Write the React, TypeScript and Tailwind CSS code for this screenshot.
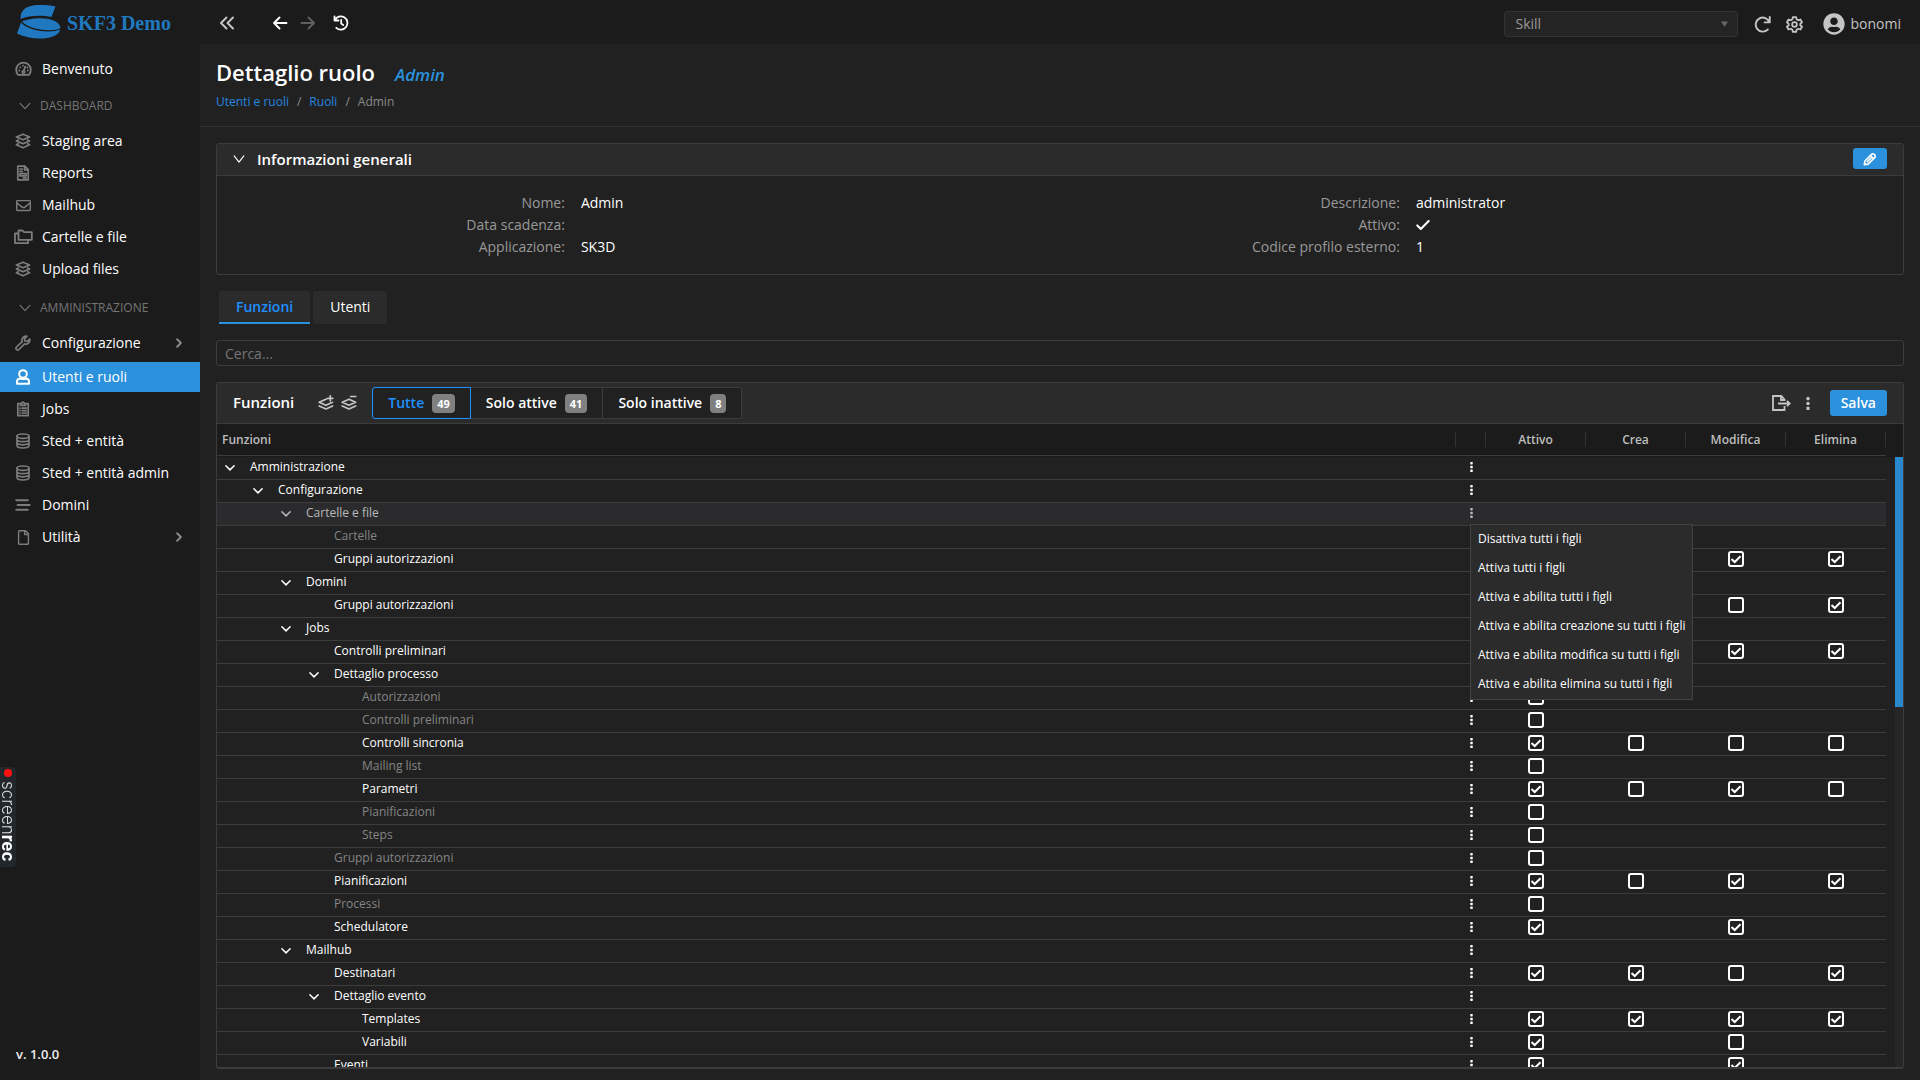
import type { ReactNode } from 'react';
import { FaRegEnvelope, FaRegFile, FaUserCircle } from 'react-icons/fa';

type IconProps = { children: ReactNode; className?: string; sw?: number };

function Icon({ children, className = 'size-4', sw = 1.5 }: IconProps) {
  return (
    <svg viewBox="0 0 16 16" fill="none" stroke="currentColor" strokeWidth={sw} strokeLinecap="round" strokeLinejoin="round" className={className} aria-hidden="true">
      {children}
    </svg>
  );
}

const icons = {
  gauge: (
    <Icon className="h-4 w-[17px]" sw={1.8}>
      <path d="M2.600 13.800A7.300 7.300 0 1 1 13.400 13.800Z" />
      <path d="M8.200 10 9.800 5.500" />
      <circle cx="8" cy="11" r="1.200" />
      <path d="M3.700 9.500h.1M4.800 6.300h.1M7.500 4.600h.1M12.200 9.500h.1M11.800 6.500h.1" />
    </Icon>
  ),
  layers: (
    <Icon sw={1.7}>
      <path d="M8 1.200 14.600 4 8 6.800 1.400 4Z" />
      <path d="M3.300 6.900 1.400 7.900 8 10.800l6.600-2.900-1.900-1" />
      <path d="M3.300 10.800 1.400 11.800 8 14.800l6.600-3-1.900-1" />
    </Icon>
  ),
  report: (
    <Icon sw={1.7}>
      <path d="M2.800 1.200h7l3.400 3.400v10.200H2.800Z" />
      <path d="M9.600 1.200v3.600h3.600M5 4h2.300M5 6.300h2.300M5 8.600h6v2.300H5ZM8.500 12.900H11" />
    </Icon>
  ),
  mail: <FaRegEnvelope className="size-[15px]" />,
  folders: (
    <svg viewBox="0 0 19 16" fill="none" stroke="currentColor" strokeWidth="1.8" strokeLinejoin="round" className="h-4 w-[19px] shrink-0" aria-hidden="true">
      <path d="M4.500 1.500h4l1.600 1.700h7.700v7.600H4.500ZM4.500 4.500H1v9.700h13v-3.400" />
    </svg>
  ),
  wrench: (
    <Icon sw={1.7}>
      <path d="M14.700 4.200 12.200 6.500 9.900 6 9.500 3.700 11.900 1.300A4 4 0 0 0 7.200 6.600L1.500 12a1.700 1.700 0 0 0 2.500 2.500L9.600 8.900a4 4 0 0 0 5.100-4.700Z" />
    </Icon>
  ),
  user: (
    <Icon sw={2}>
      <circle cx="8" cy="5" r="3.800" />
      <path d="M5 9.500C3 9.800 2 11 2 12.600v2.200h12v-2.200C14 11 13 9.800 11 9.500 9 10.300 7 10.300 5 9.500Z" />
    </Icon>
  ),
  clipboard: (
    <Icon sw={1.7}>
      <path d="M5.500 2.700H2.800v12h10.400v-12h-2.700M5.500 4.300h5V2.500H9.300a1.300 1.300 0 0 0-2.600 0H5.500Z" />
      <path d="M5 7.200h.1M7.200 7.200h4M5 9.600h.1M7.200 9.600h4M5 12h.1M7.200 12h4" />
    </Icon>
  ),
  database: (
    <Icon sw={1.7}>
      <ellipse cx="8" cy="3.200" rx="6" ry="2.200" />
      <path d="M2 3.200v9.600C2 14 4.700 15 8 15s6-1 6-2.200V3.200M2 6.400c0 1.200 2.700 2.200 6 2.200s6-1 6-2.200M2 9.600c0 1.200 2.700 2.200 6 2.200s6-1 6-2.200" />
    </Icon>
  ),
  lines: (
    <Icon sw={1.9}>
      <path d="M1.200 3.300h11.600M2.600 8h12.200M1.200 12.700h11.600" />
    </Icon>
  ),
  file: <FaRegFile className="size-[15px]" />,
};

type MenuItem = { label: string; icon: keyof typeof icons; active?: boolean; sub?: boolean };

const dashboard: MenuItem[] = [
  { label: 'Staging area', icon: 'layers' },
  { label: 'Reports', icon: 'report' },
  { label: 'Mailhub', icon: 'mail' },
  { label: 'Cartelle e file', icon: 'folders' },
  { label: 'Upload files', icon: 'layers' },
];

const admin: MenuItem[] = [
  { label: 'Configurazione', icon: 'wrench', sub: true },
  { label: 'Utenti e ruoli', icon: 'user', active: true },
  { label: 'Jobs', icon: 'clipboard' },
  { label: 'Sted + entità', icon: 'database' },
  { label: 'Sted + entità admin', icon: 'database' },
  { label: 'Domini', icon: 'lines' },
  { label: 'Utilità', icon: 'file', sub: true },
];

function NavItem({ item }: { item: MenuItem }) {
  return (
    <li className={item.sub ? 'mb-1' : 'mb-0.5'}>
      <a
        href="#"
        className={
          item.active
            ? 'flex h-[30px] items-center bg-[#2b91dc] pl-[13px] pr-[15px] text-white'
            : 'flex h-[30px] items-center pl-[13px] pr-[15px] text-white'
        }
      >
        <span className={item.active ? 'flex w-5 justify-center' : 'flex w-5 justify-center text-[#7d7d7d]'}>{icons[item.icon]}</span>
        <span className="ml-[9px] flex-1 whitespace-nowrap">{item.label}</span>
        {item.sub && (
          <Icon className="size-3 text-[#8a8a8a]" sw={2.6}>
            <path d="M5.500 3 10.500 8l-5 5" />
          </Icon>
        )}
      </a>
    </li>
  );
}

function NavSection({ label }: { label: string }) {
  return (
    <button className="flex h-10 w-full items-center pl-[19px] text-xs font-medium text-[#757575]">
      <Icon className="size-3" sw={1.6}>
        <path d="M1.500 4.500l6.500 7 6.500-7" />
      </Icon>
      <span className="ml-[9px]">{label}</span>
    </button>
  );
}

function Sidebar() {
  return (
    <aside className="flex w-[200px] shrink-0 flex-col bg-[#1b1b1b]">
      <div className="flex h-11 items-center pl-[17px] text-[#2079c0]">
        <svg viewBox="0 0 44 36" className="h-9 w-11 shrink-0" fill="currentColor" aria-hidden="true">
          <path d="M3.500 15C3 5 11 1.300 21 1c7-.1 12 .2 17.500 1.500L34.500 13C26 11 12 11 3.500 15Z" />
          <path d="M5 17.500C15 12.500 42 12 43.500 24 38 28 14 27 5 17.500Z" />
          <path d="M4 18.500C12 27.500 34 29.500 43.300 25.500 41 36 16 37.500 0 29.500Z" />
        </svg>
        <span className="ml-1.5 whitespace-nowrap pt-0.5 font-['Liberation_Serif',serif] text-xl font-bold">SKF3 Demo</span>
      </div>
      <nav className="flex-1 pt-2.5 text-sm">
        <ul>
          <NavItem item={{ label: 'Benvenuto', icon: 'gauge' }} />
        </ul>
        <NavSection label="DASHBOARD" />
        <ul className="mb-1">
          {dashboard.map((item) => (
            <NavItem key={item.label} item={item} />
          ))}
        </ul>
        <NavSection label="AMMINISTRAZIONE" />
        <ul>
          {admin.map((item) => (
            <NavItem key={item.label} item={item} />
          ))}
        </ul>
      </nav>
      <p className="pb-4 pl-4 text-[13px] font-semibold leading-5 text-[#eee]">v. 1.0.0</p>
    </aside>
  );
}

function TopBar() {
  return (
    <header className="flex h-11 shrink-0 items-center bg-[#1b1b1b] pl-[19px] pr-[19px] pt-0.5 text-[#c4c4c4]">
      <button aria-label="Comprimi menu">
        <Icon sw={2}>
          <path d="M7.500 2.500 2 8l5.500 5.500M14 2.500 8.500 8l5.500 5.500" />
        </Icon>
      </button>
      <button aria-label="Indietro" className="ml-[37px] text-white">
        <Icon sw={1.9}>
          <path d="M14.500 8H2M7.500 2.500 2 8l5.500 5.500" />
        </Icon>
      </button>
      <button aria-label="Avanti" className="ml-3 text-[#5f5f5f]">
        <Icon sw={1.9}>
          <path d="M1.500 8H14M8.500 2.500 14 8l-5.500 5.500" />
        </Icon>
      </button>
      <button aria-label="Cronologia" className="ml-[17px] text-white">
        <Icon sw={1.8}>
          <path d="M1.500 1.500v4h4M1.800 5.300A6.600 6.600 0 1 1 3.300 12.800M8.200 4.800v3.700l2 1.500" />
        </Icon>
      </button>
      <div className="ml-auto flex items-center pt-0.5">
        <div className="relative flex w-[234px] items-center">
          <select aria-label="Applicazione" className="h-[26px] w-full appearance-none rounded-[3px] border border-[#333] bg-[#242424] px-[11px] text-sm leading-5 text-[#999]">
            <option>Skill</option>
          </select>
          <svg viewBox="0 0 8 6" className="pointer-events-none absolute right-2.5 h-1.5 w-[7px] fill-[#666]" aria-hidden="true">
            <path d="M0 0h8L4 6Z" />
          </svg>
        </div>
        <button aria-label="Aggiorna" className="ml-4">
          <Icon className="size-[17px]" sw={1.8}>
            <path d="M14.800 1v5H10M14.500 6A6.600 6.600 0 1 0 13 12.700" />
          </Icon>
        </button>
        <button aria-label="Impostazioni" className="ml-[15px]">
          <Icon className="size-[17px]" sw={1.7}>
            <circle cx="8" cy="8" r="2.200" />
            <path d="M6.500 1h3l.5 2.100 1.500.9 2.100-.7 1.500 2.600L13.500 7.300v1.400l1.600 1.400-1.500 2.600-2.100-.7-1.500.9-.5 2.100h-3L6 12.900 4.500 12l-2.100.7L.9 10.100l1.600-1.400V7.300L.9 5.900l1.500-2.600 2.100.7L6 3.100Z" />
          </Icon>
        </button>
        <button className="ml-5 flex items-center gap-1.5 text-sm">
          <FaUserCircle className="size-[22px]" />
          bonomi
        </button>
      </div>
    </header>
  );
}

function Field({ label, children }: { label: string; children?: ReactNode }) {
  return (
    <div className="grid h-[22px] grid-cols-12 items-center">
      <dt className="col-span-5 px-2 text-right text-[#999]">{label}:</dt>
      <dd className="col-span-7 px-2 text-white">{children}</dd>
    </div>
  );
}

function InfoCard() {
  return (
    <section className="rounded-[3px] border border-[#3c3c3c] text-sm">
      <div className="flex h-8 items-center border-b border-[#3c3c3c] bg-[#2b2b2b] pl-[15px] pr-4">
        <button className="flex items-center gap-[11px] text-[15px] font-semibold text-white">
          <Icon className="size-3.5" sw={1.3}>
            <path d="M2.500 4.500l5.500 7 5.500-7" />
          </Icon>
          Informazioni generali
        </button>
        <button aria-label="Modifica" className="mb-0.5 ml-auto flex h-[21px] w-[34px] items-center justify-center rounded-[3px] bg-[#2b91dc] text-white">
          <Icon className="size-3.5" sw={1.9}>
            <path d="M1.500 14.500l.7-4.200 7.500-7.600a2 2 0 0 1 3 0l.7.7a2 2 0 0 1 0 3l-7.600 7.500ZM8.500 4l3.500 3.500M5 11l4-4" />
          </Icon>
        </button>
      </div>
      <div className="grid grid-cols-2 px-2 py-4">
        <dl>
          <Field label="Nome">Admin</Field>
          <Field label="Data scadenza" />
          <Field label="Applicazione">SK3D</Field>
        </dl>
        <dl>
          <Field label="Descrizione">administrator</Field>
          <Field label="Attivo">
            <Icon className="size-3.5" sw={2.4}>
              <path d="M1.500 8.500 5.500 12.500 14.500 3.500" />
            </Icon>
          </Field>
          <Field label="Codice profilo esterno">1</Field>
        </dl>
      </div>
    </section>
  );
}

// checks: attivo, crea, modifica, elimina ('x' on, 'o' off, '-' not available)
type Row = { name: string; level: number; open?: boolean; off?: boolean; hover?: boolean; checks?: string };

const rows: Row[] = [
  { name: 'Amministrazione', level: 0, open: true },
  { name: 'Configurazione', level: 1, open: true },
  { name: 'Cartelle e file', level: 2, open: true, hover: true },
  { name: 'Cartelle', level: 3, off: true, checks: 'o---' },
  { name: 'Gruppi autorizzazioni', level: 3, checks: 'xxxx' },
  { name: 'Domini', level: 2, open: true },
  { name: 'Gruppi autorizzazioni', level: 3, checks: 'xoox' },
  { name: 'Jobs', level: 2, open: true },
  { name: 'Controlli preliminari', level: 3, checks: 'xxxx' },
  { name: 'Dettaglio processo', level: 3, open: true },
  { name: 'Autorizzazioni', level: 4, off: true, checks: 'o---' },
  { name: 'Controlli preliminari', level: 4, off: true, checks: 'o---' },
  { name: 'Controlli sincronia', level: 4, checks: 'xooo' },
  { name: 'Mailing list', level: 4, off: true, checks: 'o---' },
  { name: 'Parametri', level: 4, checks: 'xoxo' },
  { name: 'Pianificazioni', level: 4, off: true, checks: 'o---' },
  { name: 'Steps', level: 4, off: true, checks: 'o---' },
  { name: 'Gruppi autorizzazioni', level: 3, off: true, checks: 'o---' },
  { name: 'Pianificazioni', level: 3, checks: 'xoxx' },
  { name: 'Processi', level: 3, off: true, checks: 'o---' },
  { name: 'Schedulatore', level: 3, checks: 'x-x-' },
  { name: 'Mailhub', level: 2, open: true },
  { name: 'Destinatari', level: 3, checks: 'xxox' },
  { name: 'Dettaglio evento', level: 3, open: true },
  { name: 'Templates', level: 4, checks: 'xxxx' },
  { name: 'Variabili', level: 4, checks: 'x-o-' },
  { name: 'Eventi', level: 3, checks: 'x-x-' },
];

const columns = ['Attivo', 'Crea', 'Modifica', 'Elimina'];

const actions = [
  'Disattiva tutti i figli',
  'Attiva tutti i figli',
  'Attiva e abilita tutti i figli',
  'Attiva e abilita creazione su tutti i figli',
  'Attiva e abilita modifica su tutti i figli',
  'Attiva e abilita elimina su tutti i figli',
];

function Check({ on, label }: { on: boolean; label: string }) {
  return (
    <span className="relative flex size-4">
      <input type="checkbox" aria-label={label} defaultChecked={on} className="peer size-4 appearance-none rounded-[3px] border-2 border-white" />
      <svg viewBox="0 0 16 16" className="pointer-events-none absolute inset-0 hidden size-4 peer-checked:block" fill="none" stroke="white" strokeWidth="2" aria-hidden="true">
        <path d="M3.500 8 6.700 11 12.500 5.200" />
      </svg>
    </span>
  );
}

function Dots({ className }: { className: string }) {
  return (
    <svg viewBox="0 0 4 14" className={className} fill="currentColor" aria-hidden="true">
      <rect x=".3" y="0" width="3.400" height="3.400" rx=".8" />
      <rect x=".3" y="5.300" width="3.400" height="3.400" rx=".8" />
      <rect x=".3" y="10.600" width="3.400" height="3.400" rx=".8" />
    </svg>
  );
}

function ContextMenu() {
  return (
    <ul className="absolute left-3.5 top-[21px] z-10 border border-[#434343] bg-[#2b2b2b] text-white">
      {actions.map((a) => (
        <li key={a}>
          <button className="block h-[29px] whitespace-nowrap px-[7px] pb-0.5 text-left">{a}</button>
        </li>
      ))}
    </ul>
  );
}

function TreeRow({ row }: { row: Row }) {
  const color = row.hover ? 'bg-[#2b2b2e] text-[#b9b9b9]' : row.off ? 'text-[#858585]' : 'text-white';
  return (
    <tr className={color}>
      <td className="h-[23px] border-b border-[#3c3c3c] p-0">
        <div className="flex items-center" style={{ paddingLeft: 7 + row.level * 28 }}>
          <span className="w-[26px] pb-px">
            {row.open && (
              <button aria-label={'Chiudi ' + row.name} className="block">
                <Icon className="size-3" sw={2}>
                  <path d="M2.500 5 8 10.500l5.500-5.500" />
                </Icon>
              </button>
            )}
          </span>
          <span className="pb-0.5 leading-5">{row.name}</span>
        </div>
      </td>
      <td className="relative border-b border-[#3c3c3c] p-0 pb-0.5">
        <button aria-label={'Azioni ' + row.name} className={row.hover ? 'mx-auto block' : 'mx-auto block text-white'}>
          <Dots className="h-2.5 w-[3px]" />
        </button>
        {row.hover && <ContextMenu />}
      </td>
      {columns.map((c, i) => {
        const v = row.checks ? row.checks[i] : '-';
        return (
          <td key={c} className="border-b border-[#3c3c3c] p-0 pb-0.5">
            <div className="flex justify-center">{v !== '-' && <Check on={v === 'x'} label={c + ' ' + row.name} />}</div>
          </td>
        );
      })}
    </tr>
  );
}

function Filter({ label, count, active }: { label: string; count: number; active?: boolean }) {
  return (
    <button
      className={
        active
          ? 'flex h-8 items-center gap-2 rounded-l-[3px] border border-[#1e90ff] bg-[#212121] px-[15px] text-[#1e90ff]'
          : 'flex h-8 items-center gap-2 border border-l-0 border-[#3c3c3c] bg-[#212121] px-[15px] text-white last:rounded-r-[3px]'
      }
    >
      {label}
      <span className="rounded bg-[#808080] px-[5px] text-[11px] font-bold leading-[19px] text-white">{count}</span>
    </button>
  );
}

function FunctionsPanel() {
  return (
    <section className="mt-4 flex min-h-0 flex-1 flex-col rounded-[3px] border border-b-2 border-[#3c3c3c]">
      <div className="flex h-[41px] shrink-0 items-center border-b border-[#3c3c3c] bg-[#2b2b2b] pl-4 pr-4 text-sm text-[#c4c4c4]">
        <h2 className="text-[15px] font-semibold text-white">Funzioni</h2>
        <button aria-label="Espandi tutto" className="ml-6">
          <Icon sw={1.7}>
            <path d="M8.500 4 1.200 7.300 8 10.300l6.500-3M1.200 11 8 14l6.600-3M12.300.8v5M9.800 3.300h5" />
          </Icon>
        </button>
        <button aria-label="Comprimi tutto" className="ml-[7px]">
          <Icon sw={1.7}>
            <path d="M8 4.200 1.200 7.300 8 10.300l6.600-3L8 4.200ZM1.200 11 8 14l6.600-3M9.800 1.500h5" />
          </Icon>
        </button>
        <div className="ml-[15px] flex font-semibold">
          <Filter label="Tutte" count={49} active />
          <Filter label="Solo attive" count={41} />
          <Filter label="Solo inattive" count={8} />
        </div>
        <button aria-label="Esporta" className="ml-auto">
          <svg viewBox="0 0 19 16" fill="none" stroke="currentColor" strokeWidth="1.800" className="h-4 w-[19px]" aria-hidden="true">
            <path d="M12.500 6V4.500L9.300 1H1v14h11.500v-4M9 1v4h3.500M6 8.500h11.500M15 5.800l2.700 2.700-2.700 2.700" />
          </svg>
        </button>
        <button aria-label="Altro" className="ml-[15px]">
          <Dots className="h-[13px] w-1" />
        </button>
        <button className="ml-5 h-[26px] rounded-[3px] bg-[#2b91dc] px-[11px] font-semibold text-white">Salva</button>
      </div>
      <div className="flex min-h-0 flex-1">
        <div className="min-w-0 flex-1 overflow-hidden">
          <table className="w-full table-fixed border-separate border-spacing-0 text-xs">
            <thead className="bg-[#1b1b1b] text-[#bdbdbd]">
              <tr>
                <th className="h-8 border-b border-[#3c3c3c] p-0 text-left font-semibold">
                  <div className="border-r border-[#333] pl-[5px] leading-[15px]">Funzioni</div>
                </th>
                <th className="w-[30px] border-b border-[#3c3c3c] p-0">
                  <div className="h-[15px] border-r border-[#333]" />
                </th>
                {columns.map((c) => (
                  <th key={c} className="w-[100px] border-b border-[#3c3c3c] p-0 text-center font-semibold">
                    <div className="border-r border-[#333] leading-[15px]">{c}</div>
                  </th>
                ))}
              </tr>
              <tr>
                <td colSpan={6} className="h-px p-0" />
              </tr>
            </thead>
            <tbody>
              {rows.map((row, i) => (
                <TreeRow key={i} row={row} />
              ))}
            </tbody>
          </table>
        </div>
        <div className="flex w-[17px] flex-col">
          <div className="h-[33px] bg-[#1b1b1b]" />
          <div className="ml-auto w-2 flex-1 bg-[#272727]">
            <div className="h-[41%] bg-[#2b88cd]" />
          </div>
        </div>
      </div>
    </section>
  );
}

export default function App() {
  return (
    <div className="flex h-screen overflow-hidden bg-[#212121] font-['Open_Sans','Noto_Sans',sans-serif]">
      <Sidebar />
      <div className="flex min-w-0 flex-1 flex-col">
        <TopBar />
        <div className="h-[83px] shrink-0 border-b border-[#333] px-4 pt-[13px]">
          <div className="flex items-baseline gap-5">
            <h1 className="text-[22px] font-semibold leading-[30px] text-white">Dettaglio ruolo</h1>
            <span className="text-[17px] font-semibold italic text-[#2b91dc]">Admin</span>
          </div>
          <nav className="mt-[5px] flex gap-2 text-xs leading-[18px] text-[#8a8a8a]">
            <a href="#" className="text-[#2487e0]">Utenti e ruoli</a>
            <span>/</span>
            <a href="#" className="text-[#2487e0]">Ruoli</a>
            <span>/</span>
            <span>Admin</span>
          </nav>
        </div>
        <main className="flex min-h-0 flex-1 flex-col px-4 pb-[11px] pt-4">
          <InfoCard />
          <div role="tablist" className="mt-4 flex gap-[3px] pl-[3px] text-sm">
            <button role="tab" aria-selected="true" className="h-[33px] rounded-t-[3px] border-b-2 border-[#2b91dc] bg-[#2b2b2b] px-[17px] font-semibold text-[#1e90ff]">
              Funzioni
            </button>
            <button role="tab" aria-selected="false" className="h-[33px] rounded-[3px] bg-[#2b2b2b] px-[17px] pb-0.5 font-medium text-white">
              Utenti
            </button>
          </div>
          <input
            type="text"
            aria-label="Cerca"
            placeholder="Cerca..."
            className="mt-4 h-[26px] w-full shrink-0 rounded-[3px] border border-[#3c3c3c] bg-transparent px-2 text-sm text-white placeholder:text-[#757575]"
          />
          <FunctionsPanel />
        </main>
      </div>
      <div className="fixed left-0 top-[71%] flex h-[100px] w-4 flex-col items-center gap-1 rounded-r bg-[#21272b] pt-0.5">
        <span className="size-2 shrink-0 rounded-full bg-[#f11]" />
        <span className="whitespace-nowrap font-['Inter',sans-serif] text-[17px] font-light leading-4 text-[#ddd] [writing-mode:vertical-rl]">
          screen<span className="font-bold text-white">rec</span>
        </span>
      </div>
    </div>
  );
}
